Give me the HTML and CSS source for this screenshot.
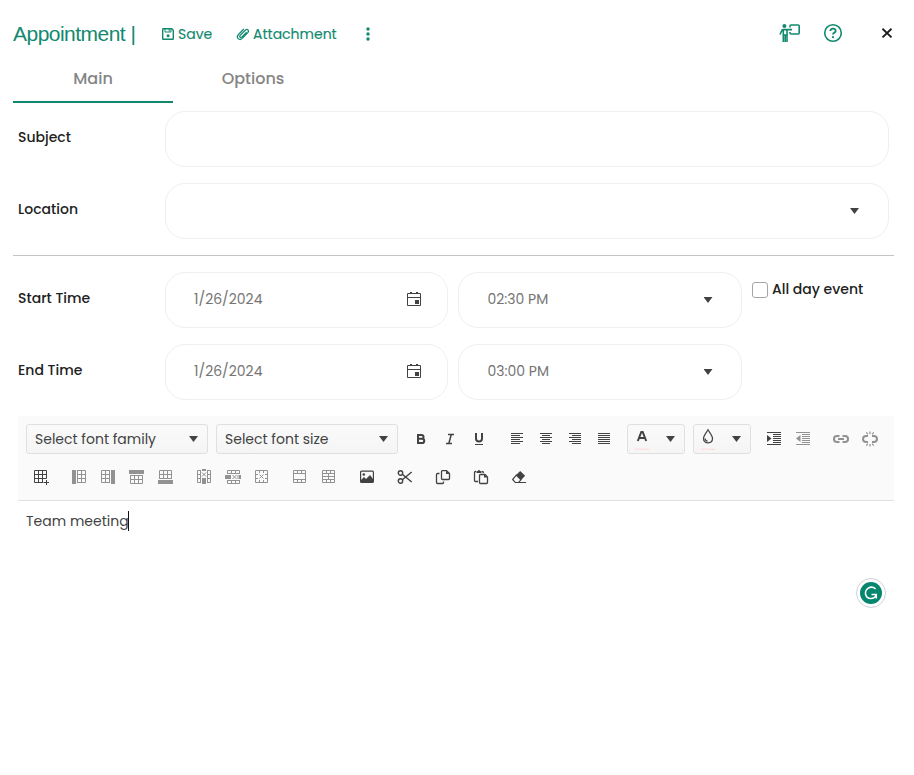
FILE: index.html
```html
<!DOCTYPE html>
<html lang="en">
<head>
<meta charset="utf-8">
<title>Appointment</title>
<link rel="stylesheet" href="styles.css">
</head>
<body>
<header class="header">
  <h1 class="title">Appointment |</h1>
  <button class="action save"><svg width="14" height="14" viewBox="0 0 14 14"><path d="M1.700 2.200q0-.5.5-.5h8.500l1.600 1.600v8.500q0 .5-.5.5H2.200q-.5 0-.5-.5z" stroke-width="1.400"/><path d="M4 2v3h6V2M8.200 2v2.500"/><circle cx="7.100" cy="8.700" r="1.500" fill="currentColor" stroke="none"/></svg><span>Save</span></button>
  <button class="action attach"><svg width="14" height="14" viewBox="0 0 14 14"><path d="M10.700 5.200 6 9.900c-1.500 1.400-3.100-.2-1.800-1.500l5.100-5.200c2-1.800 4.300.4 2.500 2.400l-5.600 5.800c-2.800 2.700-6.500-.8-3.900-3.600L7.800 2" stroke-width="1.250"/></svg><span>Attachment</span></button>
  <button class="action more"><svg width="4" height="14" viewBox="0 0 4 14"><g fill="currentColor" stroke="none"><circle cx="2" cy="2" r="1.700"/><circle cx="2" cy="7" r="1.700"/><circle cx="2" cy="12" r="1.700"/></g></svg></button>
  <div class="tools">
    <svg width="22" height="20" viewBox="0 0 22 20"><circle cx="5.400" cy="3" r="2" fill="currentColor" stroke="none"/><path d="M11 4.500V3q0-1 1-1h7.200q1 0 1 1v7q0 1-1 1H12q-1 0-1-1V9M13 6.600H4.200c-1 0-1.500.8-1.700 1.700L1 11.500M4.300 7v12M8 7.500v11.500M6.200 12.500v6.500M4 12h4" stroke-width="1.600"/></svg>
    <svg class="help" width="20" height="20" viewBox="0 0 20 20"><circle cx="10" cy="10" r="8.300" stroke-width="1.600"/><path d="M7.300 8c.2-3.400 5.900-2.900 5.300.3-.3 1.400-2.600 1.400-2.600 3.300" stroke-width="1.900"/><circle cx="10" cy="14.200" r="1.100" fill="currentColor" stroke="none"/></svg>
    <svg class="close" width="12" height="12" viewBox="0 0 12 12"><path d="m1.500 1.800 9 8.600M10.500 1.800l-9 8.600" stroke-width="1.900"/></svg>
  </div>
</header>
<nav class="tabs"><a class="tab active">Main</a><a class="tab">Options</a></nav>
<main class="form">
  <div class="row"><label>Subject</label><div class="field wide"></div></div>
  <div class="row"><label>Location</label><div class="field wide"><i class="arrow"></i></div></div>
  <hr class="rule">
  <div class="row"><label>Start Time</label>
    <div class="field"><span>1/26/2024</span><svg class="cal" width="16" height="16" viewBox="0 0 16 16"><path d="M1.500 2.500h13v12h-13zM1.500 6.500h13"/><path d="M4 1h2v2H4zM10 1h2v2h-2zM9 9h4v4H9z" fill="currentColor" stroke="none"/></svg></div>
    <div class="field"><span>02:30 PM</span><i class="arrow"></i></div>
    <label class="allday"><span class="box"></span><span>All day event</span></label></div>
  <div class="row"><label>End Time</label>
    <div class="field"><span>1/26/2024</span><svg class="cal" width="16" height="16" viewBox="0 0 16 16"><path d="M1.500 2.500h13v12h-13zM1.500 6.500h13"/><path d="M4 1h2v2H4zM10 1h2v2h-2zM9 9h4v4H9z" fill="currentColor" stroke="none"/></svg></div>
    <div class="field"><span>03:00 PM</span><i class="arrow"></i></div></div>
</main>
<section class="editor">
  <div class="toolbar">
    <div class="line">
      <div class="select"><span>Select font family</span><i class="arrow"></i></div>
      <div class="select"><span>Select font size</span><i class="arrow"></i></div>
      <div class="group">
        <button><svg viewBox="0 0 16 16"><path d="M5 4h3.500c2.700 0 2.700 3.800 0 3.800H5zM5 7.800h4c3 0 3 4.200 0 4.200H5z" stroke-width="2"/></svg></button>
        <button><svg viewBox="0 0 16 16"><path d="M6 3.500h6M4 12.500h6M9.300 3.500l-2.500 9" stroke-width="1.500"/></svg></button>
        <button><svg viewBox="0 0 16 16"><path d="M5 2v5.500c0 4 6 4 6 0V2" stroke-width="2"/><path d="M4 13.500h8"/></svg></button>
      </div>
      <div class="group">
        <button><svg viewBox="0 0 16 16"><path d="M2 2.500h12M2 4.500h9M2 6.500h12M2 8.500h9M2 10.500h12M2 12.500h9"/></svg></button>
        <button><svg viewBox="0 0 16 16"><path d="M2 2.500h12M4 4.500h8M2 6.500h12M4 8.500h8M2 10.500h12M4 12.500h8"/></svg></button>
        <button><svg viewBox="0 0 16 16"><path d="M2 2.500h12M5 4.500h9M2 6.500h12M5 8.500h9M2 10.500h12M5 12.500h9"/></svg></button>
        <button><svg viewBox="0 0 16 16"><path d="M2 2.500h12M2 4.500h12M2 6.500h12M2 8.500h12M2 10.500h12M2 12.500h12"/></svg></button>
      </div>
      <div class="color"><div class="swatch"><svg viewBox="0 0 16 16"><path d="M3.800 13 7.300 4h1.400l3.500 9M5.200 10h5.600" stroke-width="2"/></svg><svg class="under" viewBox="0 0 14 2"><path d="M0 1h4l6 .4h4"/></svg></div><i class="arrow"></i></div>
      <div class="color"><div class="swatch"><svg viewBox="0 0 16 16"><path d="M8 1.800C6.500 4.500 3.500 7.500 3.500 10.500c0 5.700 9 5.700 9 0 0-3-3-6-4.500-8.700z" stroke-width="1.200"/><path d="M5 10.500c.2 1.500 1 2.500 2.500 2.600" stroke-width="1.400"/></svg><svg class="under" viewBox="0 0 14 2"><path d="M0 1h4l6 .4h4"/></svg></div><i class="arrow"></i></div>
      <div class="group">
        <button><svg viewBox="0 0 16 16"><path d="M1 1.500h14M7 3.500h8M7 5.500h8M7 7.500h8M7 9.500h8M7 11.500h8M1 13.500h14"/><path d="M1 4l4.500 3.500L1 11z" fill="currentColor" stroke="none"/></svg></button>
        <button class="off"><svg viewBox="0 0 16 16"><path d="M1 1.500h14M7 3.500h8M7 5.500h8M7 7.500h8M7 9.500h8M7 11.500h8M1 13.500h14"/><path d="M5.500 4 1 7.500 5.500 11z" fill="currentColor" stroke="none"/></svg></button>
      </div>
      <div class="group">
        <button class="off"><svg viewBox="0 0 16 16"><path d="M6.500 4.900H4c-4.100 0-4.100 6.100 0 6.100h2.500M9.500 4.900H12c4.100 0 4.100 6.100 0 6.100H9.500M5 8h6" stroke-width="2"/></svg></button>
        <button class="off"><svg viewBox="0 0 16 16"><path d="M6 4.900H4.300c-4.400 0-4.400 6.100 0 6.100H6M10 4.900h1.700c4.400 0 4.400 6.100 0 6.100H10" stroke-width="2"/><path d="M8 .5V3M4.300 1.300l1.600 2M11.700 1.300l-1.600 2M8 15.500V13M4.300 14.700l1.600-2M11.700 14.700l-1.600-2" stroke-width="1.200"/></svg></button>
      </div>
    </div>
    <div class="line">
      <div class="group"><button><svg viewBox="0 0 16 16"><path d="M1.500 1.500h12v8M1.500 1.500v12h9M1.500 5.500h12M1.500 9.500h12M5.500 1.500v12M9.500 1.500v12M13.500 11v5M11 13.500h5"/></svg></button></div>
      <div class="group">
        <button class="off"><svg viewBox="0 0 16 16"><path d="M1 1h4v14H1z" fill="currentColor" stroke="none"/><path d="M6 1.500h8.500v12H6M6 5.500h8.500M6 9.500h8.500M6.500 1.500v12M10.500 1.500v12"/></svg></button>
        <button class="off"><svg viewBox="0 0 16 16"><path d="M11 1h4v14h-4z" fill="currentColor" stroke="none"/><path d="M10 1.500H1.500v12H10M1.500 5.500H10M1.500 9.500H10M5.500 1.500v12M9.500 1.500v12"/></svg></button>
        <button class="off"><svg viewBox="0 0 16 16"><path d="M0 1h15v4H0z" fill="currentColor" stroke="none"/><path d="M1.500 6v8.500h12V6M1.500 6.500h12M1.500 10.500h12M5.500 6v8.500M9.500 6v8.500"/></svg></button>
        <button class="off"><svg viewBox="0 0 16 16"><path d="M0 11h15v4H0z" fill="currentColor" stroke="none"/><path d="M1.500 10V1.500h12V10M1.500 5.500h12M1.500 9.500h12M5.500 10V1.500M9.500 10V1.500"/></svg></button>
      </div>
      <div class="group">
        <button class="off"><svg viewBox="0 0 16 16"><path d="M6 0h4v2H6zM6 9h4v6H6z" fill="currentColor" stroke="none"/><path d="M5 1.500H1.500v12H5M1.500 5.500H5M1.500 9.500H5M4.500 1.500v12M11 1.500h3.500v12H11M11.500 1.500v12M11 5.500h3.500M11 9.500h3.500M6 3.500l4 4M10 3.500l-4 4"/></svg></button>
        <button class="off"><svg viewBox="0 0 16 16"><path d="M0 6h6v4H0zM14 6h2v4h-2z" fill="currentColor" stroke="none"/><path d="M2.500 5V1.500h12V5M2.500 4.500h12M6.500 1.500v3M10.500 1.500v3M2.500 11v3.500h12V11M2.500 11.500h12M6.500 11.500v3M10.500 11.500v3M7.500 6l4 4M11.500 6l-4 4M13 6v4"/></svg></button>
        <button class="off"><svg viewBox="0 0 16 16"><path d="M1.500 1.500h12v12h-12zM5.500 1.500V4M9.500 1.500V4M5.500 13.500V11M9.500 13.500V11M1.500 5.500H4M1.500 9.500H4M13.500 5.500H11M13.500 9.500H11M5.500 5.500l4 4M9.500 5.500l-4 4"/></svg></button>
      </div>
      <div class="group">
        <button class="off"><svg viewBox="0 0 16 16"><path d="M1.500 1.500h12v12h-12zM1.500 4.500h12M1.500 10.500h12M5.500 1.500v3M9.500 1.500v3M5.500 10.500v3M9.500 10.500v3"/></svg></button>
        <button class="off"><svg viewBox="0 0 16 16"><path d="M1.500 1.500h12v12h-12zM1.500 4.500h12M1.500 7.500h12M1.500 10.500h12M5.500 1.500v3M9.500 1.500v3M5.500 10.500v3M9.500 10.500v3M7.500 4.500v6"/></svg></button>
      </div>
      <div class="group"><button><svg viewBox="0 0 16 16"><rect x="1.600" y="2.100" width="12.800" height="11.400" rx="1" stroke-width="1.200"/><circle cx="4.800" cy="5.500" r="1.300" fill="currentColor" stroke="none"/><path d="M2 13v-2l3-3 2 2 4-4 3 4v3z" fill="currentColor" stroke="none"/></svg></button></div>
      <div class="group"><button><svg viewBox="0 0 16 16"><circle cx="3.500" cy="4" r="2.200" stroke-width="1.400"/><circle cx="3.500" cy="12" r="2.200" stroke-width="1.400"/><path d="m5.300 5.300 9.400 7.700M5.300 10.700 14.700 3" stroke-width="1.400"/></svg></button></div>
      <div class="group"><button><svg viewBox="0 0 16 16"><path d="M7.500 1.600h4l3 3v4.900q0 1-1 1h-6q-1 0-1-1v-6.900q0-1 1-1zM4.500 4.500h-2q-1 0-1 1v8q0 1 1 1h5q1 0 1-1v-1" stroke-width="1.300"/><path d="M11 1.500V5h3.500z" fill="currentColor" stroke="none"/></svg></button></div>
      <div class="group"><button><svg viewBox="0 0 16 16"><path d="M5 12.500H2.500q-1 0-1-1v-8q0-1 1-1H3M9 2.500q1.500 0 1.500 1.500M7.500 5.500h4.500l2.500 2.500v5.500q0 1-1 1h-6q-1 0-1-1v-7q0-1 1-1z" stroke-width="1.300"/><path d="M3.500 2H5c0-1.500 2-1.500 2 0h1.500v2h-5zM11 5v3.500h3.500z" fill="currentColor" stroke="none"/></svg></button></div>
      <div class="group"><button><svg viewBox="0 0 16 16"><path d="m9.200 1.900 4.900 4.900-4 4.100-5-4.800z" fill="currentColor" stroke="none"/><path d="m5.300 6.100 4.700 4.700-2.500 2.700H4.300L1.600 10.500zM4 13.500h11" stroke-width="1.200"/></svg></button></div>
    </div>
  </div>
  <div class="content"><span>Team meeting</span><i class="caret"></i></div>
</section>
<div class="grammar"><svg width="22" height="22" viewBox="0 0 22 22"><circle cx="11" cy="11" r="11" fill="#07866f" stroke="none"/><path d="M15.600 6.800c-5-4-11.200.2-9.900 6 1.400 4.800 8.400 5 10.600.2M11.500 12.400h4.800v4.200" stroke="#fff" stroke-width="1.500"/></svg></div>
</body>
</html>
```
FILE: styles.css
```css
* { box-sizing: border-box; }
body { margin: 0; width: 914px; height: 775px; overflow: hidden; background: #fff; color: #212121; font: 500 14px/20px Poppins, Inter, sans-serif; }
svg { display: block; flex: none; fill: none; stroke: currentColor; stroke-width: 1; }
button { border: 0; padding: 0; margin: 0; background: none; color: inherit; font: inherit; display: flex; align-items: center; }
span, label { white-space: nowrap; }

.header { display: flex; align-items: center; height: 48px; margin-top: 10px; padding: 0 21px 0 13px; color: #12896f; }
.title { margin: 0; width: 148px; font: 400 21px/24px "Liberation Sans", sans-serif; letter-spacing: -.53px; white-space: nowrap; }
.action { font-weight: 400; -webkit-text-stroke: .15px currentColor; }
.action svg { margin-right: 3px; }
.save { width: 75px; }
.attach { width: 130px; }
.more svg { margin: 0; }
.tools { display: flex; align-items: center; margin-left: auto; margin-top: -2px; }
.help { margin-left: 22px; }
.close { margin-left: 38px; color: #1e1e1e; }

.tabs { display: flex; height: 45px; padding-left: 13px; color: #858585; font-size: 16px; }
.tab { width: 160px; height: 45px; padding-top: 11px; text-align: center; border-bottom: 2px solid transparent; }
.tab.active { border-color: #12896f; }

.form { display: flex; flex-direction: column; gap: 16px; padding: 8px 25px 0 18px; }
.row { display: grid; grid-template-columns: 147px 283px 284px 1fr; height: 56px; }
.row > label:first-child { align-self: center; padding-bottom: 4px; }
.field { display: flex; align-items: center; justify-content: space-between; height: 56px; border: 1px solid #efefef; border-radius: 20px; padding: 0 25px 2px 28px; color: #757575; font-weight: 400; }
.row .field + .field { margin-left: 10px; margin-right: -10px; padding-right: 28.5px; padding-left: 28.5px; }
.wide { grid-column: 2 / 5; justify-content: flex-end; }
.field .cal { color: #424242; }
.wide .arrow { margin-right: 4px; }
.arrow { flex: none; width: 9px; height: 6px; background: #424242; clip-path: polygon(0 0, 100% 0, 50% 100%); }
.field .arrow { margin-top: 2px; }
.rule { width: 881px; height: 1px; margin: 0 0 0 -5px; border: 0; background: #c4c4c4; }
.allday { display: flex; align-items: flex-start; gap: 4px; margin-left: 20px; padding-top: 7px; }
.box { width: 16px; height: 16px; margin-top: 3px; border: 1px solid #a6a6a6; border-radius: 3px; }

.editor { margin: 16px 20px 0 18px; }
.toolbar { height: 85px; padding: 8px; border-bottom: 1px solid #e0e0e0; background: #fafafa; color: #424242; }
.line { display: flex; gap: 8px; height: 30px; margin-bottom: 8px; }
.select, .color { display: flex; align-items: center; justify-content: space-between; height: 30px; border: 1px solid #e0e0e0; border-radius: 3px; background: linear-gradient(#fafafa, #f5f5f5); font-weight: 400; }
.select { width: 182px; padding: 0 9px 0 8px; }
.color { width: 58px; padding: 0 9px 0 6px; }
.group { display: flex; }
.group button { width: 30px; height: 30px; justify-content: center; }
.group button + button { margin-left: -1px; }
.group svg, .swatch svg { width: 16px; height: 16px; }
.off { color: #929292; }
.swatch { display: flex; flex-direction: column; align-items: center; height: 24px; }
.swatch svg { margin-top: 1px; }
.swatch svg.under { width: 14px; height: 2px; margin-top: 4px; color: #ffd9d6; }
.content { display: flex; align-items: center; height: 40px; padding-left: 8px; color: #424242; font-weight: 400; }
.caret { width: 1px; height: 20px; margin-left: -1px; background: #111; }
.grammar { position: absolute; left: 856px; top: 578px; display: grid; place-items: center; width: 30px; height: 30px; border: 1px solid #cfd1dd; border-radius: 50%; background: #fff; }
```
